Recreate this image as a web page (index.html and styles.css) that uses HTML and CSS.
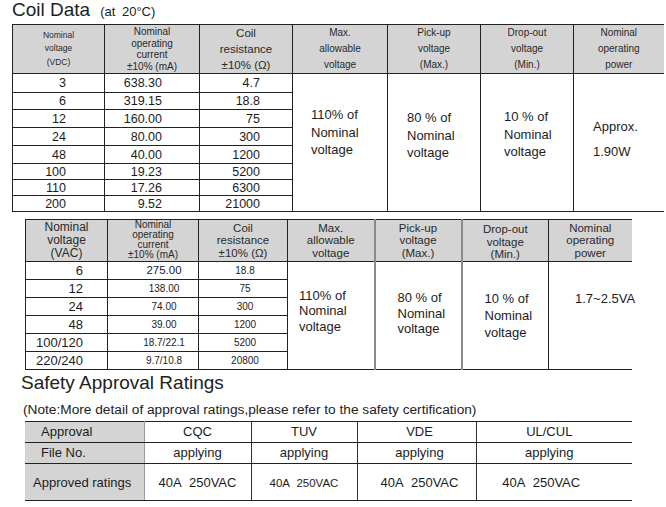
FILE: index.html
```html
<!DOCTYPE html>
<html>
<head>
<meta charset="utf-8">
<link rel="stylesheet" href="styles.css">
</head>
<body>
<div class="page">
  <h1 class="title coil-title">Coil Data<span class="cond">(at 20°C)</span></h1>

  <table class="spec dc">
    <colgroup>
      <col style="width:92px"><col style="width:95px"><col style="width:93px"><col style="width:95px"><col style="width:93px"><col style="width:93px"><col style="width:90px">
    </colgroup>
    <thead>
      <tr class="head">
        <th class="h-xs">Nominal<br>voltage<br>(VDC)</th>
        <th class="h-s">Nominal<br>operating<br>current<br>±10% (mA)</th>
        <th class="h-m">Coil<br>resistance<br>±10% (Ω)</th>
        <th class="h-n">Max.<br>allowable<br>voltage</th>
        <th class="h-n">Pick-up<br>voltage<br>(Max.)</th>
        <th class="h-n">Drop-out<br>voltage<br>(Min.)</th>
        <th class="h-n last">Nominal<br>operating<br>power</th>
      </tr>
    </thead>
    <tbody>
      <tr class="r1"><td class="v">3</td><td class="c">638.30</td><td class="o">4.7</td>
        <td class="merge m4" rowspan="8"><span class="blk">110% of<br>Nominal<br>voltage</span></td>
        <td class="merge m5" rowspan="8"><span class="blk">80 % of<br>Nominal<br>voltage</span></td>
        <td class="merge m6" rowspan="8"><span class="blk">10 % of<br>Nominal<br>voltage</span></td>
        <td class="merge m7 last" rowspan="8"><span class="blk">Approx.<br>1.90W</span></td>
      </tr>
      <tr class="r2"><td class="v">6</td><td class="c">319.15</td><td class="o">18.8</td></tr>
      <tr class="r3"><td class="v">12</td><td class="c">160.00</td><td class="o">75</td></tr>
      <tr class="r3"><td class="v">24</td><td class="c">80.00</td><td class="o">300</td></tr>
      <tr class="r3"><td class="v">48</td><td class="c">40.00</td><td class="o">1200</td></tr>
      <tr class="r4"><td class="v">100</td><td class="c">19.23</td><td class="o">5200</td></tr>
      <tr class="r4"><td class="v">110</td><td class="c">17.26</td><td class="o">6300</td></tr>
      <tr class="r4"><td class="v">200</td><td class="c">9.52</td><td class="o">21000</td></tr>
    </tbody>
  </table>

  <table class="spec ac">
    <colgroup>
      <col style="width:82px"><col style="width:91px"><col style="width:89px"><col style="width:87px"><col style="width:87px"><col style="width:87px"><col style="width:83px">
    </colgroup>
    <thead>
      <tr class="head">
        <th class="a-h1">Nominal<br>voltage<br>(VAC)</th>
        <th class="a-h2">Nominal<br>operating<br>current<br>±10% (mA)</th>
        <th class="a-h3">Coil<br>resistance<br>±10% (Ω)</th>
        <th class="a-h3">Max.<br>allowable<br>voltage</th>
        <th class="a-h3 grayl">Pick-up<br>voltage<br>(Max.)</th>
        <th class="a-h3 grayl down">Drop-out<br>voltage<br>(Min.)</th>
        <th class="a-h3 last">Nominal<br>operating<br>power</th>
      </tr>
    </thead>
    <tbody>
      <tr class="ra"><td class="v">6</td><td class="c big">275.00</td><td class="o">18.8</td>
        <td class="merge n4" rowspan="6"><span class="blk">110% of<br>Nominal<br>voltage</span></td>
        <td class="merge n5 grayl" rowspan="6"><span class="blk">80 % of<br>Nominal<br>voltage</span></td>
        <td class="merge n6 grayl" rowspan="6"><span class="blk">10 % of<br>Nominal<br>voltage</span></td>
        <td class="merge n7 last" rowspan="6"><span class="blk">1.7~2.5VA</span></td>
      </tr>
      <tr class="ra"><td class="v">12</td><td class="c">138.00</td><td class="o">75</td></tr>
      <tr class="ra"><td class="v">24</td><td class="c">74.00</td><td class="o">300</td></tr>
      <tr class="ra"><td class="v">48</td><td class="c">39.00</td><td class="o">1200</td></tr>
      <tr class="ra"><td class="v">100/120</td><td class="c">18.7/22.1</td><td class="o">5200</td></tr>
      <tr class="ra"><td class="v">220/240</td><td class="c">9.7/10.8</td><td class="o">20800</td></tr>
    </tbody>
  </table>

  <h2 class="title safety-title">Safety Approval Ratings</h2>
  <p class="note">(Note:More detail of approval ratings,please refer to the safety certification)</p>

  <table class="safety">
    <colgroup>
      <col style="width:119px"><col style="width:107px"><col style="width:106px"><col style="width:119px"><col style="width:156px">
    </colgroup>
    <tbody>
      <tr class="s1"><th class="lab ind">Approval</th><td>CQC</td><td>TUV</td><td class="vde">VDE</td><td class="ul">UL/CUL</td></tr>
      <tr class="s2"><th class="lab ind">File No.</th><td>applying</td><td>applying</td><td class="vde">applying</td><td class="ul">applying</td></tr>
      <tr class="s3"><th class="lab">Approved ratings</th><td>40A&nbsp; 250VAC</td><td class="small">40A&nbsp; 250VAC</td><td class="vde">40A&nbsp; 250VAC</td><td class="ul2">40A&nbsp; 250VAC</td></tr>
    </tbody>
  </table>
</div>
</body>
</html>
```

FILE: styles.css
```css
html, body {
  margin: 0;
  padding: 0;
  background: #ffffff;
}

body {
  font-family: "Liberation Sans", Arial, sans-serif;
  color: #1c1c1c;
  width: 666px;
  height: 507px;
  overflow: hidden;
}

.page {
  display: flex;
  flex-direction: column;
  align-items: flex-start;
}

.title {
  font-weight: normal;
  font-size: 19px;
  line-height: 20px;
  margin: 0;
  color: #222;
}

.coil-title {
  height: 24px;
  margin-left: 12px;
}

.cond {
  font-size: 13px;
  margin-left: 10px;
  word-spacing: 3px;
}

/* generic spec tables */
.spec {
  border-collapse: collapse;
  table-layout: fixed;
}

.spec th,
.spec td {
  border: 1px solid #222;
  padding: 0;
  vertical-align: middle;
}

.spec .last {
  border-right: none;
}

.spec .head th {
  background: #d4d4d4;
  font-weight: normal;
  text-align: center;
  color: #2a2a2a;
}

/* DC table */
.dc {
  margin-left: 12px;
  width: 651px;
}

.dc .head th {
  height: 48px;
}

.h-xs { font-size: 8.5px; line-height: 13.5px; }
.h-s { font-size: 10px; line-height: 11.5px; }
.h-m { font-size: 11.5px; line-height: 16px; }
.h-n { font-size: 10px; line-height: 16px; }

.dc td {
  font-size: 12.5px;
  color: #1c1c1c;
}

.dc .r1 td { height: 18px; }
.dc .r2 td { height: 16px; }
.dc .r3 td { height: 17px; }
.dc .r4 td { height: 15px; }

.dc td.v { text-align: right; padding-right: 38px; }
.dc td.c { text-align: right; padding-right: 37px; }
.dc td.o { text-align: right; padding-right: 32px; }

.merge {
  text-align: left;
}

.blk {
  display: inline-block;
  font-size: 13px;
  line-height: 17.5px;
  color: #1c1c1c;
}

.dc .m4 { padding-left: 18px; padding-bottom: 20px; }
.dc .m5 { padding-left: 19px; padding-bottom: 14px; }
.dc .m6 { padding-left: 23px; padding-bottom: 16px; }
.dc .m7 { padding-left: 19px; padding-bottom: 7px; }
.dc .m7 .blk { line-height: 25px; }

/* AC table */
.ac {
  margin-left: 25px;
  margin-top: 7px;
  width: 606px;
}

.ac .head th {
  height: 40px;
  vertical-align: middle;
}

.a-h1 { font-size: 12px; line-height: 13px; }
.a-h2 { font-size: 10px; line-height: 10px; }
.a-h3 { font-size: 11.5px; line-height: 12.5px; }
.ac .head th.down { padding-top: 3px; height: 37px; }

.ac .grayl {
  border-left: 2px solid #8a8a8a;
}

.ac .ra td { height: 17px; }

.ac td.v {
  font-size: 13px;
  text-align: right;
  padding-right: 24px;
}

.ac td.c {
  font-size: 10px;
  text-align: center;
  padding-left: 22px;
}

.ac td.c.big { font-size: 11.5px; }

.ac td.o {
  font-size: 10px;
  text-align: center;
  padding-left: 4px;
}

.ac .blk { line-height: 15.5px; }
.ac .n4 { padding-left: 11px; padding-bottom: 8px; }
.ac .n5 { padding-left: 22px; padding-bottom: 3px; }
.ac .n6 { padding-left: 22px; padding-bottom: 0; }
.ac .n6 .blk { line-height: 17px; }
.ac .n7 { padding-left: 26px; padding-bottom: 34px; }

/* Safety */
.safety-title {
  margin-left: 21px;
  margin-top: 3px;
}

.note {
  margin: 9px 0 0 23px;
  font-size: 13.7px;
  line-height: 16px;
  color: #222;
}

.safety {
  margin: 3px 0 0 25px;
  width: 607px;
  border-collapse: collapse;
  table-layout: fixed;
}

.safety th,
.safety td {
  padding: 0;
  border-top: 1px solid #222;
  border-bottom: 1px solid #222;
  font-size: 13px;
  font-weight: normal;
  text-align: center;
  vertical-align: middle;
  color: #1c1c1c;
}

.safety td {
  border-left: 1px solid #333;
}

.safety th.lab {
  background: #d4d4d4;
  text-align: left;
  padding-left: 8px;
  border-right: 1px solid #9a9a9a;
}

.safety th.ind {
  padding-left: 16px;
}

.safety .s1 > * { height: 20px; }
.safety .s2 > * { height: 20px; }
.safety .s3 > * { height: 34px; padding-top: 2px; }

.safety td.small { font-size: 11.5px; }
.safety td.vde { padding-left: 6px; }
.safety td.ul { padding-right: 10px; }
.safety td.ul2 { padding-right: 26px; }
```
